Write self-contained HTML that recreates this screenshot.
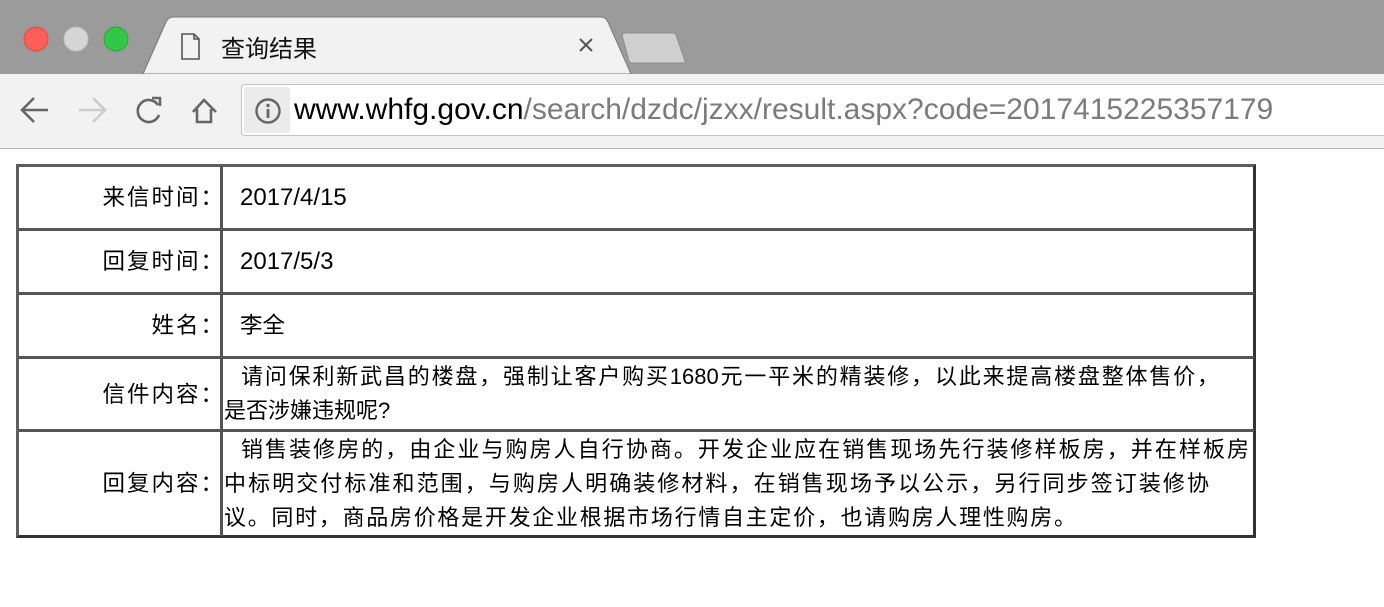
<!DOCTYPE html>
<html><head><meta charset="utf-8"><style>
*{margin:0;padding:0;box-sizing:border-box}
body{width:1384px;height:607px;background:#fff;position:relative;overflow:hidden;font-family:"Liberation Sans","Noto Sans CJK SC",sans-serif;}
.abs{position:absolute}
.cell{position:absolute;font-size:22px;color:#000;white-space:nowrap;line-height:34px}
.lab{left:20px;width:205px;text-align:right;font-size:22.5px;letter-spacing:2px}
.num{font-size:24px}
.j{text-align:justify;text-align-last:justify;display:block;overflow:hidden}
</style></head><body>
<div class="abs" style="left:0;top:0;width:1384px;height:74px;background:#9b9b9b"></div>
<svg class="abs" style="left:0;top:0" width="700" height="80">
<path d="M143 74 L166 22 Q168 17 174 17 L600 17 Q606 17 608 22 L631 74 Z" fill="#f2f2f2" stroke="#7a7a7a" stroke-width="1"/>
<path d="M622 35 Q623 33 626 33 L672 33 Q675 33 676 35 L685 61 Q686 63 683 63 L632 63 Q630 63 629 61 Z" fill="#cfcfcf" stroke="#8d8d8d"/>
<circle cx="36" cy="39" r="12" fill="#fc5f57" stroke="#de4a42"/>
<circle cx="76" cy="39" r="12" fill="#d5d5d5" stroke="#c0c0c0"/>
<circle cx="116" cy="39" r="12" fill="#33c748" stroke="#27a83a"/>
<path d="M182 34 L194 34 L199 39 L199 59 L182 59 Z M194 34 L194 39 L199 39" fill="none" stroke="#555" stroke-width="1.6"/>
<path d="M580 39 L592 51 M592 39 L580 51" stroke="#555" stroke-width="2"/>
</svg>
<div class="abs" style="left:221px;top:29px;font-size:24px;color:#111">查询结果</div>
<div class="abs" style="left:0;top:74px;width:1384px;height:75px;background:#f2f2f2;border-bottom:1px solid #b8b8b8"></div>
<svg class="abs" style="left:0;top:74px" width="240" height="75">
<path d="M23 36 L48 36 M34 24 L22 36 L34 48" fill="none" stroke="#666" stroke-width="2.6"/>
<path d="M79 36 L104 36 M93 24 L105 36 L93 48" fill="none" stroke="#ccc" stroke-width="2.6"/>
<path d="M158 31 A11 11 0 1 0 159 41" fill="none" stroke="#666" stroke-width="2.6"/>
<path d="M152 24 L160 24 L160 32" fill="none" stroke="#666" stroke-width="2.6"/>
<path d="M193 38 L204 26 L216 38 M197 35 L197 48 L211 48 L211 35" fill="none" stroke="#666" stroke-width="2.6"/>
</svg>
<div class="abs" style="left:241px;top:84px;width:1160px;height:52px;background:#fff;border:1px solid #c4c4c4;border-radius:4px"></div>
<div class="abs" style="left:244px;top:87px;width:46px;height:46px;background:#ebebeb;border-radius:3px"></div>
<svg class="abs" style="left:254px;top:97px" width="28" height="28"><circle cx="14" cy="14" r="11.5" fill="none" stroke="#666" stroke-width="2.4"/><circle cx="14" cy="8.5" r="1.7" fill="#666"/><rect x="12.6" y="12" width="2.8" height="9" fill="#666"/></svg>
<div class="abs" style="left:294px;top:93px;font-size:30px;color:#000;white-space:nowrap">www.whfg.gov.cn<span style="color:#7b7b7b">/search/dzdc/jzxx/result.aspx?code=2017415225357179</span></div>

<div class="abs" style="left:16px;top:164px;width:1240px;height:374px;border:3px solid #5e5e5e;border-right-color:#333;border-bottom-color:#333"></div>
<div class="abs" style="left:220px;top:166px;width:3px;height:370px;background:#555"></div>
<div class="abs" style="left:18px;top:228px;width:1236px;height:3px;background:#555"></div>
<div class="abs" style="left:18px;top:292px;width:1236px;height:3px;background:#555"></div>
<div class="abs" style="left:18px;top:356px;width:1236px;height:3px;background:#555"></div>
<div class="abs" style="left:18px;top:429px;width:1236px;height:3px;background:#555"></div>

<div class="cell lab" style="top:181px">来信时间：</div>
<div class="cell num" style="left:240px;top:181px">2017/4/15</div>
<div class="cell lab" style="top:245px">回复时间：</div>
<div class="cell num" style="left:240px;top:245px">2017/5/3</div>
<div class="cell lab" style="top:309px">姓名：</div>
<div class="cell" style="left:240px;top:309px;font-size:22.5px">李全</div>
<div class="cell lab" style="top:378px">信件内容：</div>
<div class="cell j" style="left:241px;width:978px;top:360px">请问保利新武昌的楼盘，强制让客户购买1680元一平米的精装修，以此来提高楼盘整体售价，</div>
<div class="cell" style="left:224px;top:394px">是否涉嫌违规呢?</div>
<div class="cell lab" style="top:467px">回复内容：</div>
<div class="cell j" style="left:241px;width:1008px;top:433px">销售装修房的，由企业与购房人自行协商。开发企业应在销售现场先行装修样板房，并在样板房</div>
<div class="cell j" style="left:224px;width:985px;top:467px">中标明交付标准和范围，与购房人明确装修材料，在销售现场予以公示，另行同步签订装修协</div>
<div class="cell j" style="left:224px;width:852px;top:501px">议。同时，商品房价格是开发企业根据市场行情自主定价，也请购房人理性购房。</div>
</body></html>
